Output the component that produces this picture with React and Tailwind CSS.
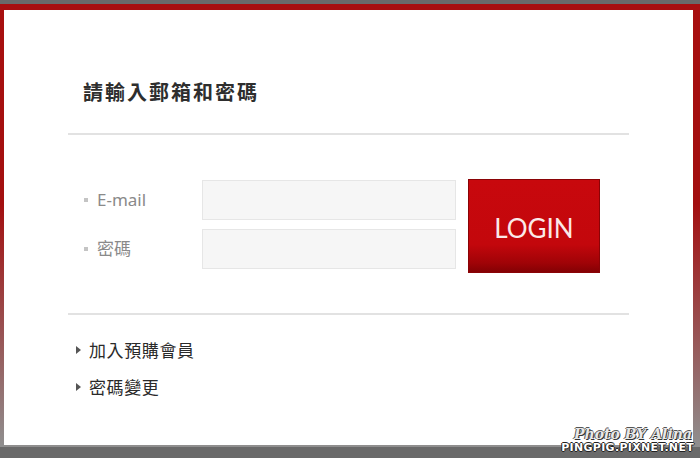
const LINKS = ['加入預購會員', '密碼變更']

function Field({ label }) {
  return (
    <div className="flex items-center h-[40px]">
      <div className="flex items-center w-[134px] pl-[16px]">
        <span className="w-[4px] h-[4px] bg-[#c4c4c4] mr-[9px]" />
        <span className="text-[17px] text-[#8a8a8a]">{label}</span>
      </div>
      <input
        type="text"
        className="w-[254px] h-[40px] bg-[#f6f6f6] border border-[#e6e6e6] outline-none"
      />
    </div>
  )
}

export default function App() {
  return (
    <div
      className="relative w-[700px] h-[458px] bg-[#6a6a6a] pt-[4px] overflow-hidden"
      style={{ fontFamily: '"Noto Sans", "Noto Sans CJK TC", sans-serif' }}
    >
      {/* red frame fading to grey at the bottom */}
      <div className="h-[443px] pl-[4px] pr-[7px] pt-[6px] pb-[2px] bg-[linear-gradient(to_bottom,#a80f10_0%,#a30f10_45%,#8f8f8f_100%)]">
        <div className="h-full bg-white pt-[68px] px-[64px]">
          <h1 className="pl-[15px] text-[20px] leading-[28px] font-bold text-[#2e2e2e] tracking-[2px]" style={{ fontFamily: '"Noto Sans CJK TC", sans-serif' }}>
            請輸入郵箱和密碼
          </h1>
          <div className="mt-[27px] h-[2px] bg-[#e2e2e2]" />

          <div className="flex mt-[44px]">
            <div className="flex flex-col gap-[9px] pt-[1px]">
              <Field label="E-mail" />
              <Field label="密碼" />
            </div>
            <button
              className="ml-[12px] w-[132px] h-[94px] border border-[#8a0306] pt-[4px] text-[26px] text-[#fbe9e9] tracking-[0px] bg-[linear-gradient(to_bottom,#c8080d_0%,#c3070c_70%,#a00307_90%,#840104_100%)]"
              style={{ fontFamily: 'Lato, sans-serif' }}
            >
              LOGIN
            </button>
          </div>

          <div className="mt-[40px] h-[2px] bg-[#e2e2e2]" />

          <ul className="mt-[16px] flex flex-col">
            {LINKS.map((t) => (
              <li key={t} className="flex items-center h-[37px] pl-[8px]">
                <span className="w-0 h-0 border-y-[4px] border-y-transparent border-l-[5px] border-l-[#555] mr-[8px]" />
                <span className="text-[17px] tracking-[0.6px] text-[#2a2a2a]" style={{ fontFamily: '"Noto Sans CJK TC", sans-serif' }}>{t}</span>
              </li>
            ))}
          </ul>
        </div>
      </div>

      {/* watermark */}
      <div className="absolute right-[6px] bottom-[5px] flex flex-col items-end leading-none">
        <span
          className="text-[14px] italic font-bold text-[#e8e8e8] mr-[2px]"
          style={{ fontFamily: '"DejaVu Serif", serif', textShadow: '1px 1px 0 #333, -1px 0 0 #555, 0 -1px 0 #555' }}
        >
          Photo BY Alina
        </span>
        <span
          className="text-[11px] font-bold text-white tracking-[0.3px] mt-[1px]"
          style={{ fontFamily: '"DejaVu Sans", sans-serif', textShadow: '1px 0 0 #222, -1px 0 0 #222, 0 1px 0 #222, 0 -1px 0 #222' }}
        >
          PINGPIG.PIXNET.NET
        </span>
      </div>
    </div>
  )
}
